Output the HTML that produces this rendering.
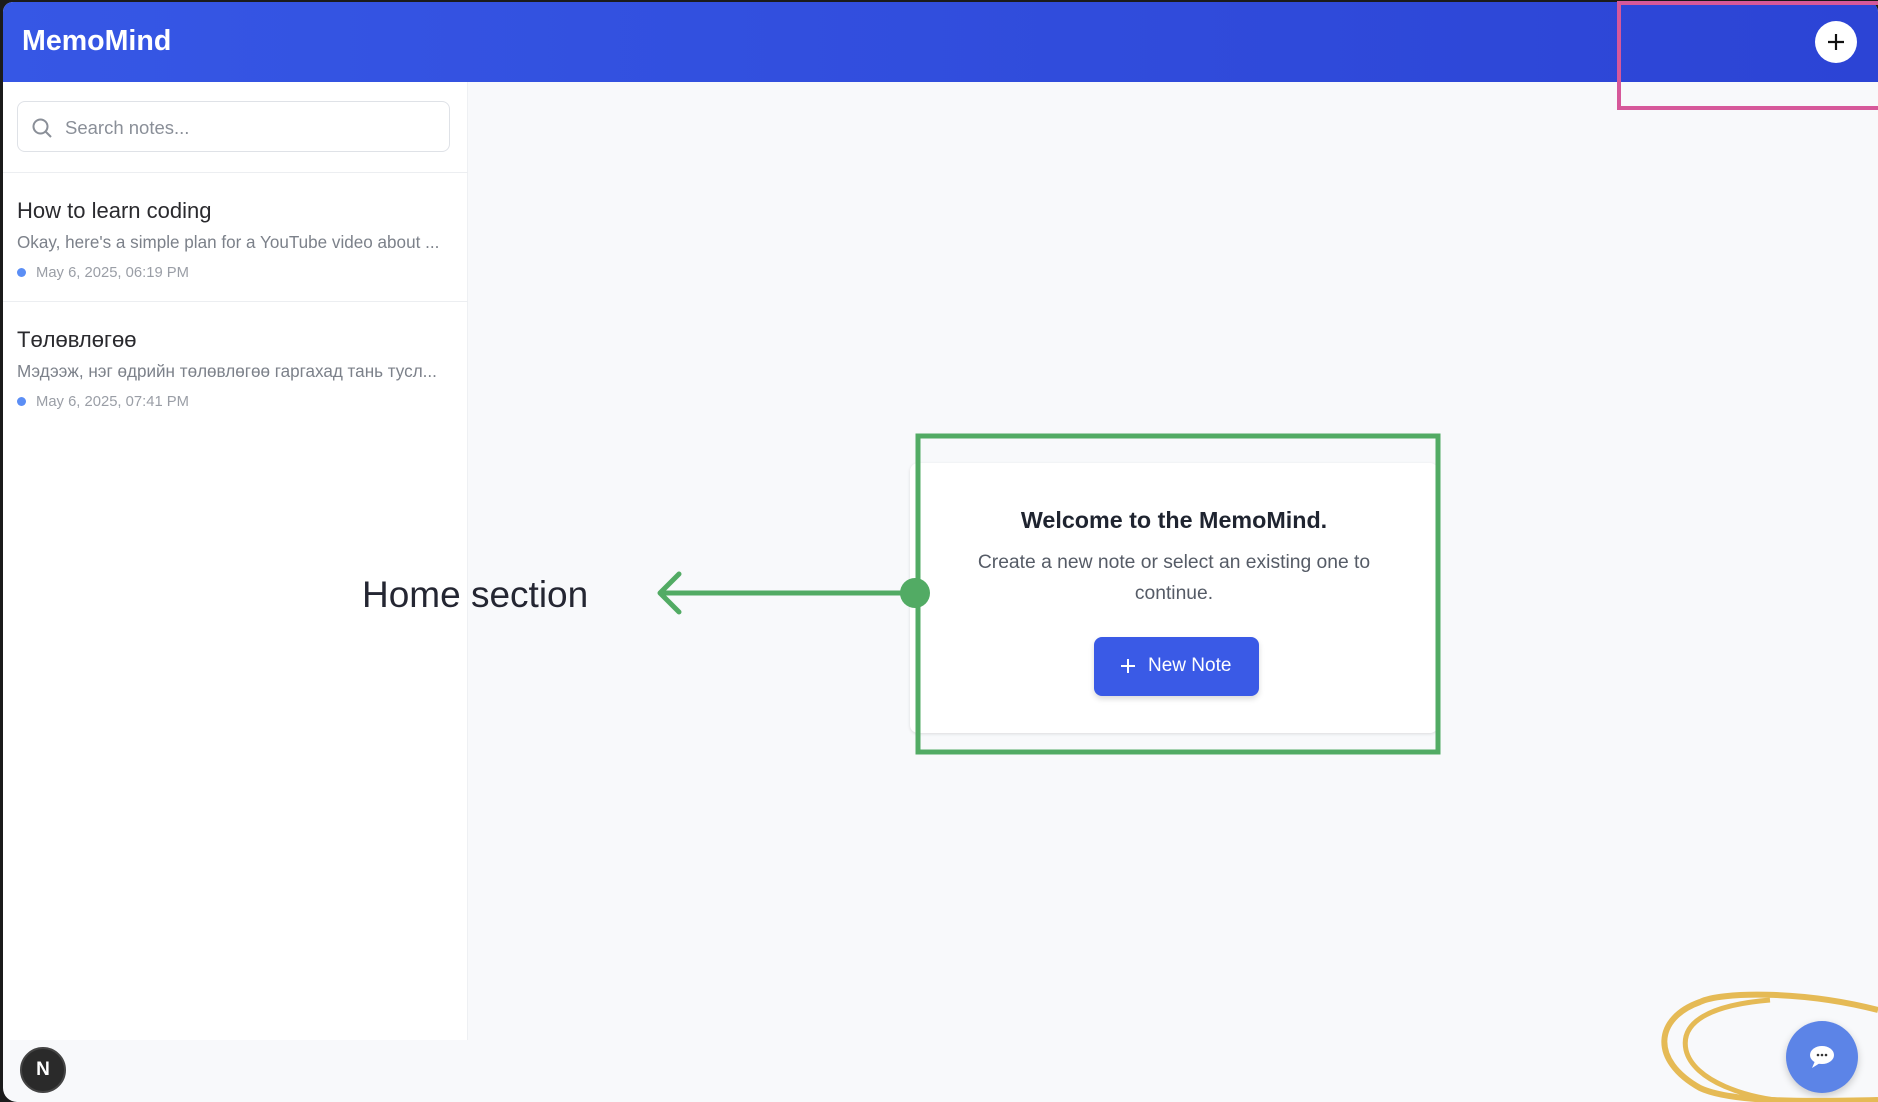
<!DOCTYPE html>
<html><head><meta charset="utf-8"><style>
*{box-sizing:border-box;margin:0;padding:0}
body{width:1878px;height:1102px;background:#1b1b1b;font-family:"Liberation Sans","Noto Sans CJK SC",sans-serif;overflow:hidden;position:relative}
.app{position:absolute;left:3px;top:2px;right:0;bottom:0;background:#f8f9fb;border-radius:10px 10px 0 14px;overflow:hidden}
.hdr{position:absolute;left:0;top:0;right:0;height:80px;background:linear-gradient(90deg,#3657e5,#2c44d5)}
.logo{position:absolute;left:19px;top:23px;color:#fff;font-weight:bold;font-size:28.6px}
.plus{position:absolute;left:1812px;top:19px;width:42px;height:42px;border-radius:50%;background:#fff}
.side{position:absolute;left:0;top:80px;width:465px;height:958px;background:#fff;border-right:1px solid #eef0f3}
.search{position:absolute;left:14px;top:19px;width:433px;height:51px;border:1px solid #dfe2e7;border-radius:8px}
.search span{position:absolute;left:47px;top:15px;font-size:18.5px;color:#8a8f98}
.div{position:absolute;left:0;width:465px;height:1px;background:#eceef1}
.t{position:absolute;left:14px;font-size:22px;color:#2a2a2e}
.s{position:absolute;left:14px;font-size:17.1px;color:#7c818a}
.d{position:absolute;left:33px;font-size:14.8px;color:#9a9ea6}
.dot{position:absolute;left:14px;width:9px;height:9px;border-radius:50%;background:#5b8ef5}
.card{position:absolute;left:907px;top:461px;width:528px;height:270px;background:#fff;border-radius:8px;box-shadow:0 1px 3px rgba(0,0,0,.12)}
.w{position:absolute;left:0;right:0;top:44px;text-align:center;font-weight:bold;font-size:23.3px;color:#1f2430}
.p{position:absolute;left:50px;right:50px;top:84px;text-align:center;font-size:19.3px;line-height:31px;color:#555b66}
.btn{position:absolute;left:184px;top:174px;width:165px;height:59px;background:#3a5ae6;border-radius:8px;color:#fff;font-size:19px;box-shadow:0 3px 6px rgba(0,0,0,.15)}
.btn span{position:absolute;left:54px;top:18px}
.n{position:absolute;left:17px;top:1045px;width:46px;height:46px;border-radius:50%;background:#2a2a2a;border:2px solid #444;color:#fff;font-size:19px;text-align:center;line-height:42px;font-weight:bold}
.chat{position:absolute;left:1783px;top:1019px;width:72px;height:72px;border-radius:50%;background:#5c84e7;box-shadow:0 3px 8px rgba(0,0,0,.2)}
.hs{position:absolute;left:362px;top:574px;font-size:37px;color:#242632}
</style></head><body>
<div class="app">
<div class="hdr"><div class="logo">MemoMind</div>
<div class="plus"><svg width="42" height="42"><path d="M21 13v16M13 21h16" stroke="#111" stroke-width="2.2"/></svg></div></div>
<div class="side">
<div class="search"><svg style="position:absolute;left:13px;top:15px" width="22" height="22"><circle cx="9.5" cy="9.5" r="7" fill="none" stroke="#8a8f98" stroke-width="2"/><path d="M15 15l5 5" stroke="#8a8f98" stroke-width="2"/></svg><span>Search notes...</span></div>
<div class="div" style="top:90px"></div>
<div class="t" style="top:116px">How to learn coding</div>
<div class="s" style="top:151px">Okay, here's a simple plan for a YouTube video about ...</div>
<div class="dot" style="top:186px"></div><div class="d" style="top:183px">May 6, 2025, 06:19 PM</div>
<div class="div" style="top:219px"></div>
<div class="t" style="top:245px">Төлөвлөгөө</div>
<div class="s" style="top:280px">Мэдээж, нэг өдрийн төлөвлөгөө гаргахад тань тусл...</div>
<div class="dot" style="top:315px"></div><div class="d" style="top:312px">May 6, 2025, 07:41 PM</div>
</div>
<div class="card"><div class="w">Welcome to the MemoMind.</div>
<div class="p">Create a new note or select an existing one to continue.</div>
<div class="btn"><svg style="position:absolute;left:25px;top:20px" width="18" height="18"><path d="M9 2v14M2 9h14" stroke="#fff" stroke-width="2"/></svg><span>New Note</span></div></div>
<div class="n">N</div>
<div class="chat"><svg width="72" height="72"><ellipse cx="36" cy="34" rx="12" ry="9" fill="#fff"/><path d="M29 40l-3 7 8-5z" fill="#fff"/><circle cx="32" cy="34" r="1.3" fill="#333"/><circle cx="36" cy="34" r="1.3" fill="#333"/><circle cx="40" cy="34" r="1.3" fill="#333"/></svg></div>
</div>
<div class="hs">Home section</div>
<svg style="position:absolute;left:0;top:0" width="1878" height="1102">
<rect x="1619" y="3" width="262" height="105" fill="none" stroke="#d6589a" stroke-width="4"/>
<rect x="918" y="436" width="520" height="316" fill="none" stroke="#52ab64" stroke-width="5"/>
<path d="M917 593H661M679 574l-19 19 19 19" fill="none" stroke="#52ab64" stroke-width="5" stroke-linecap="round" stroke-linejoin="round"/>
<circle cx="915" cy="593" r="15" fill="#52ab64"/>
<path d="M1878 1010C1800 990 1720 992 1700 1002C1655 1018 1650 1060 1700 1088C1730 1102 1800 1102 1878 1100" fill="none" stroke="#e5ba55" stroke-width="6"/>
<path d="M1770 1000C1710 1005 1680 1022 1686 1050C1693 1080 1745 1100 1800 1102" fill="none" stroke="#e5ba55" stroke-width="5"/>
</svg>
</body></html>
